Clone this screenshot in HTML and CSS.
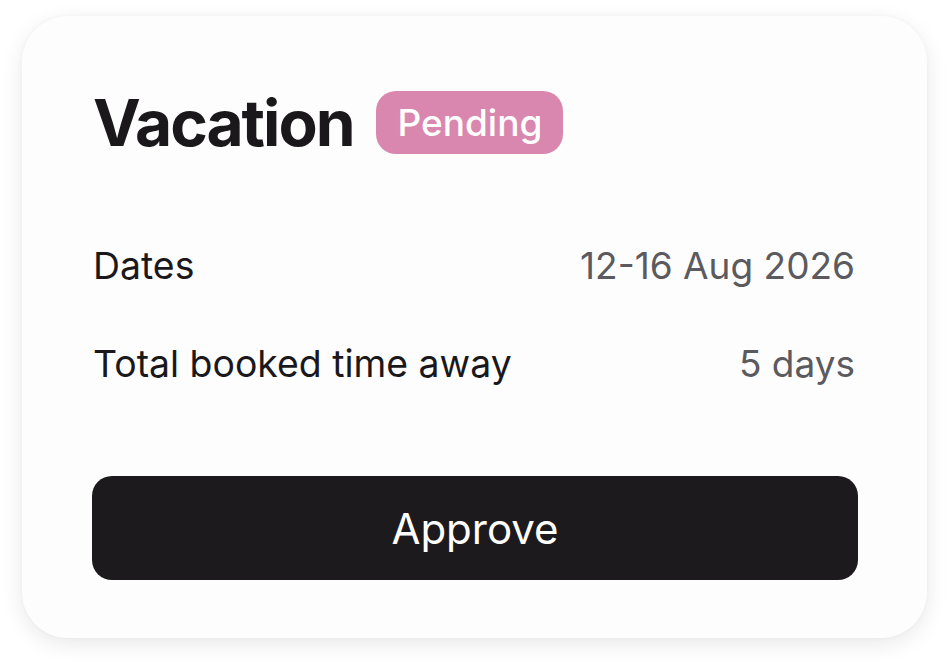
FILE: index.html
```html
<!DOCTYPE html>
<html>
<head>
<meta charset="utf-8">
<link rel="stylesheet" href="styles.css">
</head>
<body>
<div class="card">
  <div class="header">
    <h1 class="title">Vacation</h1>
    <span class="badge">Pending</span>
  </div>
  <div class="rows">
    <div class="row"><span class="label">Dates</span><span class="value">12-16 Aug 2026</span></div>
    <div class="row"><span class="label">Total booked time away</span><span class="value">5 days</span></div>
  </div>
  <button class="approve">Approve</button>
</div>
</body>
</html>
```
FILE: styles.css
```css
html, body { margin: 0; padding: 0; background: #ffffff; }
body { font-family: "Inter", "Liberation Sans", sans-serif; padding: 16px 23px 30px 22px; }
.card {
  width: 905px;
  height: 622px;
  box-sizing: border-box;
  background: #fdfdfd;
  border-radius: 46px;
  box-shadow: 0 6px 22px rgba(0,0,0,0.09), 0 0 4px rgba(0,0,0,0.03);
  padding: 75px 72px 0 71px;
}
.header { display: flex; align-items: center; gap: 23px; height: 63px; }
.title { margin: 0; font-size: 64px; font-weight: 700; color: #1a181b; letter-spacing: -2px; line-height: 1; }
.badge {
  background: #d987af;
  color: #fff;
  border-radius: 20px;
  height: 63px;
  padding: 0 21px;
  display: flex; align-items: center;
  font-size: 37px;
  font-weight: 500;
}
.rows { margin-top: 89px; display: flex; flex-direction: column; gap: 53px; }
.row { display: flex; justify-content: space-between; align-items: center; height: 45px; line-height: 45px; font-size: 37px; }
.label { color: #1a181b; font-size: 37.4px; }
.value { color: #5b5a5e; }
.approve {
  display: block;
  margin-top: 90px;
  margin-left: -1px;
  width: 766px;
  height: 104px;
  border: 0;
  border-radius: 20px;
  background: #1c1a1d;
  color: #fff;
  font-family: "Inter", "Liberation Sans", sans-serif;
  font-size: 42px;
}
```
